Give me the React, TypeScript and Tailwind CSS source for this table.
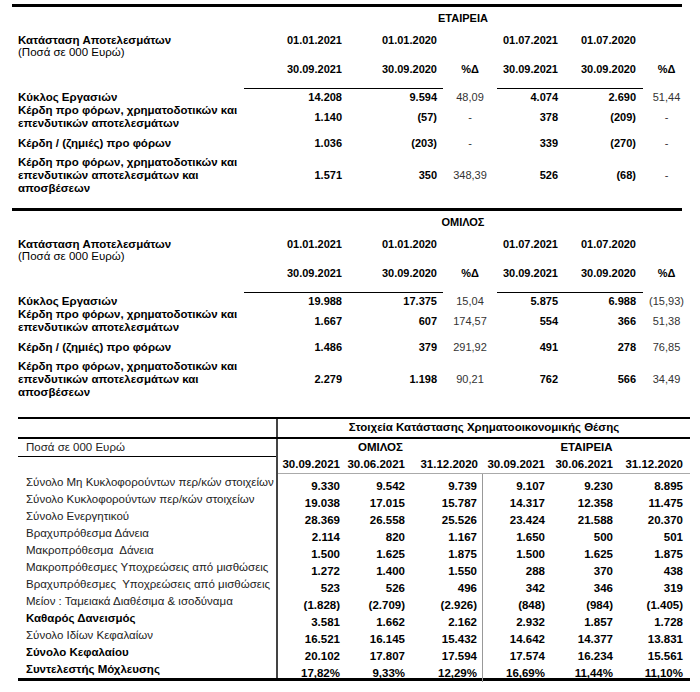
const RESULT_COLS = "grid grid-cols-[232px_102px_97px_54px_65px_81px_47px]";
const BALANCE_COLS = "grid grid-cols-[67px_65px_73px_67px_68px_72px]";

type ResultRow = { label: string[]; values: string[]; height: string };

const companyRows: ResultRow[] = [
  { label: ["Κύκλος Εργασιών"], values: ["14.208", "9.594", "48,09", "4.074", "2.690", "51,44"], height: "h-[15px]" },
  {
    label: ["Κέρδη προ φόρων, χρηματοδοτικών και", "επενδυτικών αποτελεσμάτων"],
    values: ["1.140", "(57)", "-", "378", "(209)", "-"],
    height: "h-[26px]",
  },
  { label: ["Κέρδη / (ζημιές) προ φόρων"], values: ["1.036", "(203)", "-", "339", "(270)", "-"], height: "h-[26px]" },
  {
    label: ["Κέρδη προ φόρων, χρηματοδοτικών και", "επενδυτικών αποτελεσμάτων και", "αποσβέσεων"],
    values: ["1.571", "350", "348,39", "526", "(68)", "-"],
    height: "h-[39px]",
  },
];

const groupRows: ResultRow[] = [
  { label: ["Κύκλος Εργασιών"], values: ["19.988", "17.375", "15,04", "5.875", "6.988", "(15,93)"], height: "h-[15px]" },
  {
    label: ["Κέρδη προ φόρων, χρηματοδοτικών και", "επενδυτικών αποτελεσμάτων"],
    values: ["1.667", "607", "174,57", "554", "366", "51,38"],
    height: "h-[26px]",
  },
  { label: ["Κέρδη / (ζημιές) προ φόρων"], values: ["1.486", "379", "291,92", "491", "278", "76,85"], height: "h-[26px]" },
  {
    label: ["Κέρδη προ φόρων, χρηματοδοτικών και", "επενδυτικών αποτελεσμάτων και", "αποσβέσεων"],
    values: ["2.279", "1.198", "90,21", "762", "566", "34,49"],
    height: "h-[39px]",
  },
];

type BalanceRow = { label: string; bold?: boolean; values: string[] };

const balanceRows: BalanceRow[] = [
  { label: "Σύνολο Μη Κυκλοφορούντων περ/κών στοιχείων", values: ["9.330", "9.542", "9.739", "9.107", "9.230", "8.895"] },
  { label: "Σύνολο Κυκλοφορούντων περ/κών στοιχείων", values: ["19.038", "17.015", "15.787", "14.317", "12.358", "11.475"] },
  { label: "Σύνολο Ενεργητικού", values: ["28.369", "26.558", "25.526", "23.424", "21.588", "20.370"] },
  { label: "Βραχυπρόθεσμα Δάνεια", values: ["2.114", "820", "1.167", "1.650", "500", "501"] },
  { label: "Μακροπρόθεσμα  Δάνεια", values: ["1.500", "1.625", "1.875", "1.500", "1.625", "1.875"] },
  { label: "Μακροπρόθεσμες Υποχρεώσεις από μισθώσεις", values: ["1.272", "1.400", "1.550", "288", "370", "438"] },
  { label: "Βραχυπρόθεσμες  Υποχρεώσεις από μισθώσεις", values: ["523", "526", "496", "342", "346", "319"] },
  { label: "Μείον : Ταμειακά Διαθέσιμα & ισοδύναμα", values: ["(1.828)", "(2.709)", "(2.926)", "(848)", "(984)", "(1.405)"] },
  { label: "Καθαρός Δανεισμός", bold: true, values: ["3.581", "1.662", "2.162", "2.932", "1.857", "1.728"] },
  { label: "Σύνολο Ιδίων Κεφαλαίων", values: ["16.521", "16.145", "15.432", "14.642", "14.377", "13.831"] },
  { label: "Σύνολο Κεφαλαίου", bold: true, values: ["20.102", "17.807", "17.594", "17.574", "16.234", "15.561"] },
  { label: "Συντελεστής Μόχλευσης", bold: true, values: ["17,82%", "9,33%", "12,29%", "16,69%", "11,44%", "11,10%"] },
];

const balanceDates = ["30.09.2021", "30.06.2021", "31.12.2020", "30.09.2021", "30.06.2021", "31.12.2020"];
// right padding per column so numbers line up with the dates
const balancePad = ["pr-[5px]", "pr-[5px]", "pr-[5px]", "pr-[5px]", "pr-[5px]", "pr-[7px]"];

function ResultsTable({ title, rows }: Readonly<{ title: string; rows: ResultRow[] }>) {
  return (
    <div className="h-[204px] w-[670px] border-t-[3px] border-black">
      <div className={RESULT_COLS}>
        <div className="col-span-6 col-start-2 flex h-[23px] items-center justify-center pr-2 font-bold">
          {title}
        </div>
      </div>
      <div className={RESULT_COLS}>
        <div className="row-span-2 pl-[6px] pt-[4px] text-[11.5px] leading-[12px]">
          <p className="font-bold">Κατάσταση Αποτελεσμάτων</p>
          <p>(Ποσά σε 000 Ευρώ)</p>
        </div>
        <div className="flex h-[20px] items-center justify-end pr-[4px] font-bold">01.01.2021</div>
        <div className="flex h-[20px] items-center justify-end pr-[6px] font-bold">01.01.2020</div>
        <div />
        <div className="flex h-[20px] items-center justify-end pr-[4px] font-bold">01.07.2021</div>
        <div className="flex h-[20px] items-center justify-end pr-[7px] font-bold">01.07.2020</div>
        <div />
        <div className="flex h-[39px] items-center justify-end border-b border-black pr-[4px] font-bold">
          30.09.2021
        </div>
        <div className="flex h-[39px] items-center justify-end border-b border-black pr-[6px] font-bold">
          30.09.2020
        </div>
        <div className="flex h-[39px] items-center justify-center font-bold">%Δ</div>
        <div className="flex h-[39px] items-center justify-end border-b border-black pr-[4px] font-bold">
          30.09.2021
        </div>
        <div className="flex h-[39px] items-center justify-end border-b border-black pr-[7px] font-bold">
          30.09.2020
        </div>
        <div className="flex h-[39px] items-center justify-center font-bold">%Δ</div>
      </div>
      {rows.map((row) => (
        <div className={`${RESULT_COLS} ${row.height}`} key={row.label.join(" ")}>
          <div className="flex flex-col justify-center pl-[6px] text-[11.5px] leading-[13px] font-bold">
            {row.label.map((line) => (
              <span key={line}>{line}</span>
            ))}
          </div>
          <div className="flex items-center justify-end pr-[4px] font-bold">{row.values[0]}</div>
          <div className="flex items-center justify-end pr-[6px] font-bold">{row.values[1]}</div>
          <div className="flex items-center justify-center text-[#333]">{row.values[2]}</div>
          <div className="flex items-center justify-end pr-[4px] font-bold">{row.values[3]}</div>
          <div className="flex items-center justify-end pr-[7px] font-bold">{row.values[4]}</div>
          <div className="flex items-center justify-center whitespace-nowrap text-[#333]">{row.values[5]}</div>
        </div>
      ))}
    </div>
  );
}

function BalanceTable() {
  return (
    <div className="ml-[18px] mt-[5px] w-[672px] border-t-2 border-b-[3px] border-black text-[11.5px]">
      <div className="flex h-[20px] border-b-2 border-black">
        <div className="w-[260px] border-r-2 border-[#444]" />
        <div className="flex flex-1 items-center justify-center font-bold">
          Στοιχεία Κατάστασης Χρηματοοικονομικής Θέσης
        </div>
      </div>
      <div className="flex">
        <div className="w-[260px] border-r-2 border-[#444]">
          <div className="flex h-[18px] items-center border-b border-black pl-2 text-[#222]">Ποσά σε 000 Ευρώ</div>
          <div className="h-[17px]" />
        </div>
        <div className="flex-1">
          <div className={`${BALANCE_COLS} h-[17px] font-bold`}>
            <div className="col-span-3 flex items-center justify-center">ΟΜΙΛΟΣ</div>
            <div className="col-span-3 flex items-center justify-center">ΕΤΑΙΡΕΙΑ</div>
          </div>
          <div className={`${BALANCE_COLS} h-[18px] border-b border-[#aaa] font-bold`}>
            {balanceDates.map((date, index) => (
              <div className={`flex items-center justify-end ${balancePad[index]}`} key={index}>
                {date}
              </div>
            ))}
          </div>
        </div>
      </div>
      {balanceRows.map((row) => (
        <div className="flex h-[17px]" key={row.label}>
          <div
            className={`flex w-[260px] items-center whitespace-pre border-r-2 border-[#444] pl-2 ${
              row.bold ? "font-bold" : "text-[#222]"
            }`}
          >
            {row.label}
          </div>
          <div className={`${BALANCE_COLS} flex-1 font-bold`}>
            {row.values.map((value, index) => (
              <div
                className={`flex items-center justify-end pt-1 ${balancePad[index]} ${
                  index === 2 ? "border-r border-[#999]" : ""
                }`}
                key={index}
              >
                {value}
              </div>
            ))}
          </div>
        </div>
      ))}
    </div>
  );
}

export default function App() {
  return (
    <div className="h-[692px] w-[700px] bg-white pt-[4px] font-['Liberation_Sans',Arial,sans-serif] text-[11px] text-black">
      <div className="ml-[12px]">
        <ResultsTable rows={companyRows} title="ΕΤΑΙΡΕΙΑ" />
        <ResultsTable rows={groupRows} title="ΟΜΙΛΟΣ" />
      </div>
      <BalanceTable />
    </div>
  );
}
